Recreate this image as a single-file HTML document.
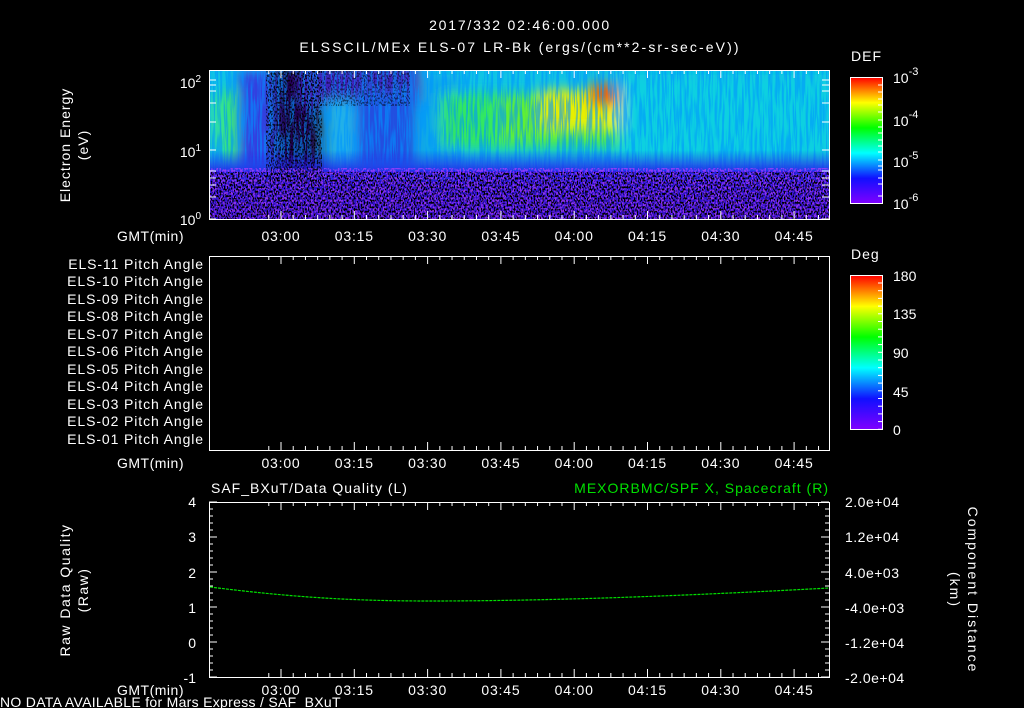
<!DOCTYPE html>
<html><head><meta charset="utf-8"><style>
html,body{margin:0;padding:0;background:#000;width:1024px;height:708px;overflow:hidden}
svg{display:block}
text{font-family:"Liberation Sans",sans-serif;fill:#fff;font-size:14px}
</style></head><body>
<svg width="1024" height="708" viewBox="0 0 1024 708" xmlns="http://www.w3.org/2000/svg">
<defs>
<linearGradient id="cb" x1="0" y1="1" x2="0" y2="0">
<stop offset="0" stop-color="#8000ff"/><stop offset="0.2" stop-color="#1010ff"/><stop offset="0.4" stop-color="#00ffff"/><stop offset="0.6" stop-color="#00ff00"/><stop offset="0.8" stop-color="#ffff00"/><stop offset="1" stop-color="#ff0000"/>
</linearGradient>
<linearGradient id="fade" x1="0" y1="0" x2="0" y2="1">
<stop offset="0" stop-color="#2818e8" stop-opacity="0"/><stop offset="0.3" stop-color="#2818e8" stop-opacity="0.8"/><stop offset="1" stop-color="#4010d0" stop-opacity="0.6"/>
</linearGradient>
<filter id="bl" x="-30%" y="-30%" width="160%" height="160%"><feGaussianBlur stdDeviation="6"/></filter>
<filter id="nz" x="0" y="0" width="100%" height="100%">
<feTurbulence type="fractalNoise" baseFrequency="0.7 0.45" numOctaves="1" seed="3"/>
<feColorMatrix type="matrix" values="0 0 0 0 0  0 0 0 0 0  0 0 0 0 0  0 0 0 -9 4.5"/>
</filter>
<filter id="nzp" x="0" y="0" width="100%" height="100%">
<feTurbulence type="fractalNoise" baseFrequency="0.6 0.4" numOctaves="1" seed="11"/>
<feColorMatrix type="matrix" values="0 0 0 0 0.45  0 0 0 0 0.05  0 0 0 0 1  0 0 0 -9 4.8"/>
</filter>
<filter id="st" x="0" y="0" width="100%" height="100%">
<feTurbulence type="fractalNoise" baseFrequency="0.45 0.03" numOctaves="2" seed="5"/>
<feColorMatrix type="matrix" values="0 0 0 0 0  0 0 0 0 0.3  0 0 0 0 1  0 0 0 -5 2.9"/>
</filter>
<clipPath id="sp"><rect x="210" y="71" width="619" height="148"/></clipPath>
</defs>

<text x="520" y="30" text-anchor="middle" font-size="17" letter-spacing="1.8">2017/332 02:46:00.000</text>
<text x="520" y="52" text-anchor="middle" font-size="17" letter-spacing="2.1">ELSSCIL/MEx ELS-07 LR-Bk  (ergs/(cm**2-sr-sec-eV))</text>

<!-- spectrogram -->
<g clip-path="url(#sp)">
<rect x="210" y="71" width="619" height="148" fill="#2010c0"/>
<rect x="210" y="71" width="619" height="100" fill="#10c4e4"/>
<g filter="url(#bl)">
<rect x="238" y="71" width="40" height="95" fill="#3040e0"/>
<rect x="275" y="66" width="50" height="115" fill="#200050"/>
<rect x="300" y="66" width="120" height="40" fill="#4020c0"/>
<rect x="325" y="100" width="30" height="60" fill="#20b0e8"/>
<rect x="356" y="90" width="60" height="75" fill="#2050e0"/>
<rect x="420" y="75" width="40" height="90" fill="#10a8e8"/>
<rect x="210" y="95" width="22" height="55" fill="#30e0a0"/>
<rect x="226" y="88" width="10" height="72" fill="#40f030"/>
<rect x="440" y="93" width="190" height="55" fill="#30e860"/>
<rect x="500" y="96" width="125" height="45" fill="#60f030"/>
<rect x="540" y="90" width="80" height="38" fill="#e8f000"/>
<rect x="590" y="84" width="28" height="22" fill="#f06000"/>
<rect x="620" y="75" width="210" height="90" fill="#10d0e0"/>
</g>
<rect x="210" y="71" width="619" height="110" filter="url(#st)" opacity="0.6"/>
<rect x="210" y="150" width="619" height="69" fill="url(#fade)"/>
<rect x="210" y="168" width="619" height="51" filter="url(#nzp)" opacity="0.7"/>
<rect x="210" y="172" width="619" height="47" filter="url(#nz)"/>
<rect x="266" y="71" width="56" height="110" filter="url(#nz)" opacity="0.8"/>
<rect x="300" y="71" width="110" height="35" filter="url(#nz)" opacity="0.5"/>
</g>
<rect x="209.5" y="70.5" width="620" height="149" fill="none" stroke="#fff"/>
<text x="201" y="88" text-anchor="end" font-size="13">10<tspan dy="-6" font-size="10">2</tspan></text>
<text x="201" y="157" text-anchor="end" font-size="13">10<tspan dy="-6" font-size="10">1</tspan></text>
<text x="201" y="225" text-anchor="end" font-size="13">10<tspan dy="-6" font-size="10">0</tspan></text>
<text transform="translate(70,145) rotate(-90)" text-anchor="middle" font-size="14" letter-spacing="1">Electron Energy</text>
<text transform="translate(88,145) rotate(-90)" text-anchor="middle" font-size="14" letter-spacing="1">(eV)</text>

<!-- colorbar 1 -->
<text x="851" y="61" font-size="15" letter-spacing="1">DEF</text>
<rect x="850.5" y="77.5" width="32" height="126" fill="url(#cb)" stroke="#fff"/>
<text x="893" y="83" font-size="15">10<tspan dy="-8" font-size="11">-3</tspan></text>
<text x="893" y="126" font-size="15">10<tspan dy="-8" font-size="11">-4</tspan></text>
<text x="893" y="167" font-size="15">10<tspan dy="-8" font-size="11">-5</tspan></text>
<text x="893" y="209" font-size="15">10<tspan dy="-8" font-size="11">-6</tspan></text>

<!-- panel 2 -->
<rect x="209.5" y="256.5" width="620" height="194" fill="none" stroke="#fff"/>
<g font-size="13" text-anchor="end" letter-spacing="0.9">
<text x="204" y="269">ELS-11 Pitch Angle</text>
<text x="204" y="286">ELS-10 Pitch Angle</text>
<text x="204" y="304">ELS-09 Pitch Angle</text>
<text x="204" y="321">ELS-08 Pitch Angle</text>
<text x="204" y="339">ELS-07 Pitch Angle</text>
<text x="204" y="356">ELS-06 Pitch Angle</text>
<text x="204" y="374">ELS-05 Pitch Angle</text>
<text x="204" y="391">ELS-04 Pitch Angle</text>
<text x="204" y="409">ELS-03 Pitch Angle</text>
<text x="204" y="426">ELS-02 Pitch Angle</text>
<text x="204" y="444">ELS-01 Pitch Angle</text>
</g>
<text x="851" y="259" font-size="15" letter-spacing="1">Deg</text>
<rect x="850.5" y="275.5" width="32" height="154" fill="url(#cb)" stroke="#fff"/>
<g font-size="15"><text x="893" y="281">180</text><text x="893" y="319">135</text><text x="893" y="358">90</text><text x="893" y="397">45</text><text x="893" y="435">0</text></g>

<!-- panel 3 -->
<text x="211" y="493" font-size="15" letter-spacing="1">SAF_BXuT/Data Quality (L)</text>
<text x="829" y="493" font-size="15" text-anchor="end" letter-spacing="1" style="fill:#00e000">MEXORBMC/SPF X, Spacecraft (R)</text>
<rect x="209.5" y="502.5" width="620" height="175" fill="none" stroke="#fff"/>
<g font-size="13" text-anchor="end">
<text x="196" y="507">4</text><text x="196" y="542">3</text><text x="196" y="578">2</text><text x="196" y="613">1</text><text x="196" y="648">0</text><text x="196" y="683">-1</text>
</g>
<g font-size="13" letter-spacing="0.5">
<text x="845" y="507">2.0e+04</text><text x="845" y="542">1.2e+04</text><text x="845" y="578">4.0e+03</text><text x="845" y="613">-4.0e+03</text><text x="845" y="648">-1.2e+04</text><text x="845" y="683">-2.0e+04</text>
</g>
<text transform="translate(70,590) rotate(-90)" text-anchor="middle" font-size="14" letter-spacing="1.5">Raw Data Quality</text>
<text transform="translate(88,590) rotate(-90)" text-anchor="middle" font-size="14" letter-spacing="1.5">(Raw)</text>
<text transform="translate(968,590) rotate(90)" text-anchor="middle" font-size="14" letter-spacing="2">Component Distance</text>
<text transform="translate(950,590) rotate(90)" text-anchor="middle" font-size="14" letter-spacing="2">(km)</text>
<path d="M210 587 C 290 597 350 601 430 601 C 560 601 700 595 829 588" fill="none" stroke="#00e000" stroke-width="1.2" stroke-dasharray="3 1"/>

<g id="ticks" stroke="#fff" stroke-width="1"></g>

<g font-size="13" letter-spacing="0.5">
<text x="117" y="241">GMT(min)</text><text x="117" y="468">GMT(min)</text><text x="117" y="695">GMT(min)</text>
</g>
<g id="tl" font-size="13" text-anchor="middle" letter-spacing="0.8"></g>
<text x="0" y="707" font-size="12" letter-spacing="0.3">NO DATA AVAILABLE for Mars  Express / SAF_BXuT</text>
<script>
(function(){
var ns="http://www.w3.org/2000/svg",g=document.getElementById('ticks'),tl=document.getElementById('tl');
function ln(x1,y1,x2,y2){var l=document.createElementNS(ns,'line');l.setAttribute('x1',x1);l.setAttribute('y1',y1);l.setAttribute('x2',x2);l.setAttribute('y2',y2);g.appendChild(l);}
var labs=['03:00','03:15','03:30','03:45','04:00','04:15','04:30','04:45'];
var panels=[[70,219,241],[256,450,468],[502,677,695]];
var step=73.3/6;
for(var p=0;p<3;p++){var t=panels[p][0],b=panels[p][1];
 for(var i=-1;i<52;i++){var x=281+i*step;if(x<210||x>829)continue;var maj=(i%6===0);var L=maj?8:4;ln(x,t,x,t+L);ln(x,b,x,b-L);}
 for(var k=0;k<8;k++){var tx=document.createElementNS(ns,'text');tx.setAttribute('x',281+k*73.3);tx.setAttribute('y',panels[p][2]);tx.textContent=labs[k];tl.appendChild(tx);}
}
[80,85,91,103,122,150,171,178,185,197,219].forEach(function(y){ln(209,y,216,y);ln(829,y,822,y);});
for(var j=0;j<=25;j++){var y=502+j*7;var L=(j%5===0)?8:4;ln(209,y,209+L,y);ln(829,y,829-L,y);}
[85,92,99,105,112,120,127,133,140,146,152,160,166,170,178,184,196].forEach(function(y){ln(882,y,878,y);});
for(var y2=283;y2<430;y2+=7.7)ln(882,y2,878,y2);
})();
</script>
</svg>
</body></html>
